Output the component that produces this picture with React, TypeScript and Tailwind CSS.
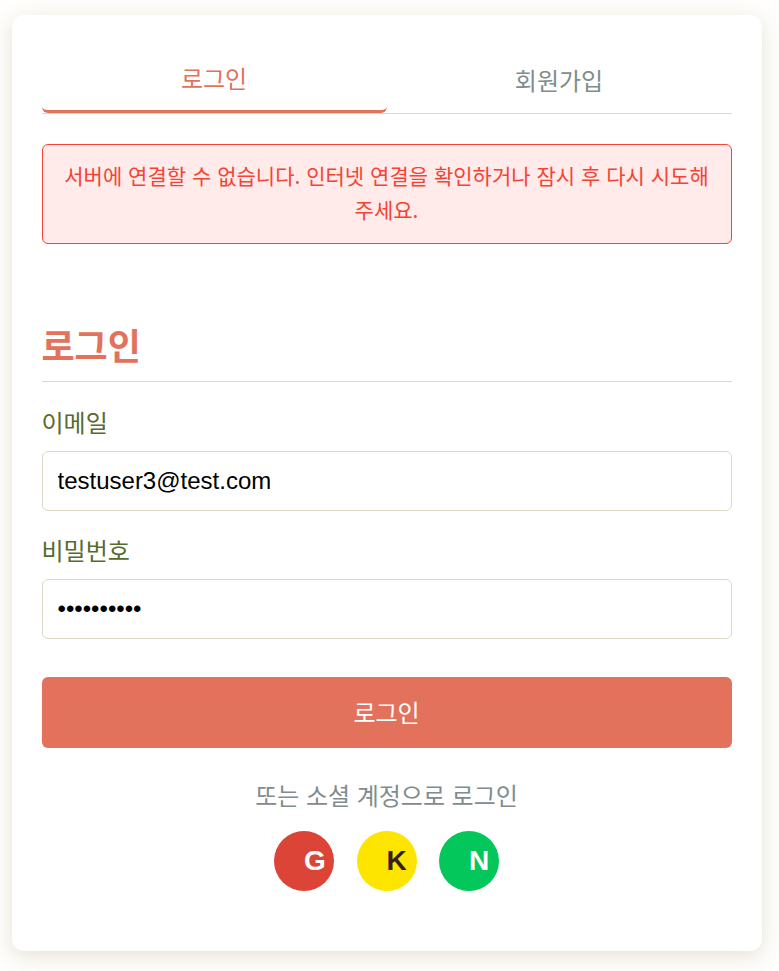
const kr = "font-['Noto_Sans_CJK_KR',sans-serif]";
const providers = [
  { name: "G", color: "bg-[#db4437] text-white" },
  { name: "K", color: "bg-[#fee500] text-[#3c1e1e]" },
  { name: "N", color: "bg-[#03c75a] text-white" },
];

export default function App() {
  return (
    <div className={`h-[971px] overflow-hidden bg-[#fffefc] pl-3 pr-[17px] pt-[15px] pb-5 text-[24px] [word-spacing:1.2px] ${kr}`}>
      <main className="h-[936px] rounded-xl bg-white px-[30px] pt-[30px] shadow-[0_5px_20px_rgba(95,85,30,0.17)]">
        <div className="flex h-[69px] border-b border-[#dcd8c5]">
          <button className="h-[68px] w-1/2 rounded-md border-b-3 border-[#e2725b] pr-px leading-[36px] text-[#e2725b]">로그인</button>
          <button className="h-[68px] w-1/2 pt-px pr-px leading-[36px] text-[#7f8c8d]">회원가입</button>
        </div>
        <div className="mt-[30px] h-[100px] rounded-md border border-[#f44336] bg-[#ffebe9] pt-[13px] pr-[21px] pl-5 text-center text-[21px] leading-[34px] text-[#f44336]">
          서버에 연결할 수 없습니다. 인터넷 연결을 확인하거나 잠시 후 다시 시도해<br />주세요.
        </div>
        <form className="pt-[68px]" onSubmit={(e) => e.preventDefault()}>
          <h1 className="h-[70px] border-b border-[#dcd8c5] text-[36px] leading-[64px] font-bold text-[#e2725b]"><span className="-ml-[0.5px]">로그인</span></h1>
          <label className="block h-[69px] pt-[21px] leading-[37px] text-[#556b2f]"><span className="-ml-[0.5px]">이메일</span></label>
          <input aria-label="이메일" className="block h-[60px] w-full rounded-md border border-[#dcd8c5] px-[14.5px] font-['Liberation_Sans',sans-serif] text-[24px] text-black" defaultValue="testuser3@test.com" />
          <label className="block h-[68px] pt-5 leading-[37px] text-[#556b2f]"><span className="-ml-[0.5px]">비밀번호</span></label>
          <input aria-label="비밀번호" type="password" className="block h-[60px] w-full rounded-md border border-[#dcd8c5] px-[14.5px] font-['Liberation_Sans',sans-serif] text-[24px] text-black" defaultValue="abcdefghij" />
          <button className="mt-[38px] block h-[71px] w-full rounded-md bg-[#e2725b] pr-px pb-0.5 text-white">로그인</button>
          <p className="mt-7 pr-px text-center leading-[38px] text-[#7f8c8d]">또는 소셜 계정으로 로그인</p>
          <div className="mt-[17px] mr-px flex justify-center gap-[22.5px]">
            {providers.map((provider) => (
              <button key={provider.name} className={`h-[60px] w-[60px] rounded-full pl-[30px] text-left font-['Liberation_Sans',sans-serif] text-[28px] font-bold ${provider.color}`}>{provider.name}</button>
            ))}
          </div>
        </form>
      </main>
    </div>
  );
}
